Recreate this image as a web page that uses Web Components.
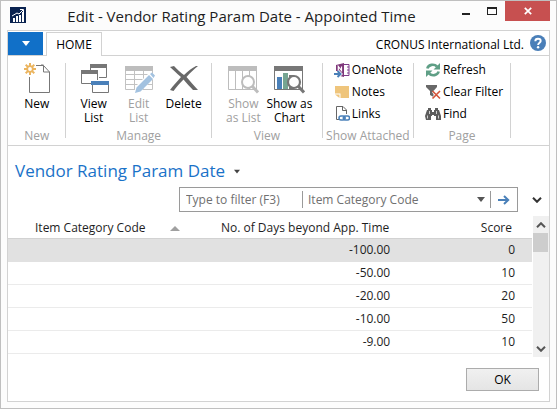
<!DOCTYPE html>
<html lang="en">
<head>
<meta charset="utf-8">
<title>Edit - Vendor Rating Param Date - Appointed Time</title>
<style>
  body { margin: 0; font: 12px/16px "Open Sans", "Noto Sans", sans-serif; color: #1e1e1e; background: #fcfcfc; }
</style>
</head>
<body>
<app-window>
  <title-bar slot="title">Edit - Vendor Rating Param Date - Appointed Time</title-bar>
  <tab-strip company="CRONUS International Ltd.">HOME</tab-strip>
  <ribbon-bar>
    <ribbon-group label="New" style="--w:58">
      <big-action icon="new">New</big-action>
    </ribbon-group>
    <ribbon-group label="Manage" style="--w:146">
      <big-action icon="views">View<br>List</big-action>
      <big-action icon="edit" off>Edit<br>List</big-action>
      <big-action icon="delete">Delete</big-action>
    </ribbon-group>
    <ribbon-group label="View" style="--w:111">
      <big-action icon="list" off>Show<br>as List</big-action>
      <big-action icon="chart">Show as<br>Chart</big-action>
    </ribbon-group>
    <ribbon-group label="Show Attached" style="--w:91" stack>
      <small-action icon="onenote">OneNote</small-action>
      <small-action icon="notes">Notes</small-action>
      <small-action icon="links">Links</small-action>
    </ribbon-group>
    <ribbon-group label="Page" style="--w:97" stack>
      <small-action icon="refresh">Refresh</small-action>
      <small-action icon="clear">Clear Filter</small-action>
      <small-action icon="find">Find</small-action>
    </ribbon-group>
  </ribbon-bar>
  <page-heading>Vendor Rating Param Date</page-heading>
  <filter-bar></filter-bar>
  <data-grid></data-grid>
  <page-footer>OK</page-footer>
</app-window>

<script>
const ICONS = {
  logo: [16, 16, `<path fill="#0a2350" d="M0 0h16v16H0z"/><path fill="#fff" d="M3 11h2v4H3zM6 9h2v6H6zM9 8h2v7H9zM12 5h2v10h-2z"/><path d="M2 9l5-3 2 1 4-4M10 2.500h3.500V6" fill="none" stroke="#fff"/>`],
  min: [8, 8, `<path fill="#222" d="M0 6h8v2H0z"/>`],
  max: [10, 8, `<path fill="#222" fill-rule="evenodd" d="M0 0h10v8H0zM1 2v5h8V2z"/>`],
  close: [8, 8, `<path d="M.8 .8l6.400 6.400M7.200 .8L.8 7.200" stroke="#fff" stroke-width="1.700"/>`],
  down: [8, 5, `<path d="M0 0h8L4 5z" fill="currentColor"/>`],
  up: [10, 5, `<path d="M0 5h10L5 0z" fill="#a0a0a0"/>`],
  help: [16, 16, `<circle cx="8" cy="8" r="8" fill="#4a7fb8"/><path d="M5.300 6.200C5.300 4.400 6.500 3.700 8 3.700s2.700.8 2.700 2.300C10.700 7.600 8.100 7.800 8.100 10" fill="none" stroke="#fff" stroke-width="1.900"/><circle cx="8.100" cy="12.200" r="1.200" fill="#fff"/>`],
  new: [32, 32, `<path d="M15 3.500h7.500l6 6.500v20.500h-20V15M22.500 3.500V10h6M20 3l2.500 0" fill="none" stroke="#777"/><g stroke="#ebb45e" stroke-width="2"><circle cx="9" cy="7" r="2.800" fill="#fff" stroke-width="1.800"/><path d="M9 1v3M9 10v3M3 7h3M12 7h3M4.700 2.700l2.200 2.200M11.100 9.100l2.200 2.200M13.300 2.700l-2.200 2.200M6.900 9.100l-2.200 2.200"/></g>`],
  views: [32, 32, `<g fill="#fff" stroke="#777"><path d="M12.500 2.500h16v13h-16z"/><path d="M3.500 8.500h16v13h-16z"/><path d="M14.500 19.500h16v11h-16z"/></g><path fill="#fff" d="M10 8h2v-1h-2zM20 8v12h1V8zM13 18h7v1h-7zM13 18v5h1v-5zM18 18h13v1H18z"/><path fill="#777" d="M12 2h17v4H12zM3 8h17v4H3z"/><path fill="#4a80b9" d="M13 19h18v4H13z"/>`],
  edit: [32, 32, `<path d="M2.500 4.500h27v23h-27zM2 12.500h28M2 17.500h28M2 22.500h28M11.500 8v20M20.500 8v20" fill="none" stroke="#c2c2c2"/><path fill="#bdbdbd" d="M2 4h28v5H2z"/><path d="M11 31l2-7 14-14 5 5-14 14z" fill="#fff"/><path d="M12 31l1.500-5.500L26 13l4 4-12.500 12.500zM27 12l2-1.500 3 3-1.500 2.500z" fill="#a3c2e0"/>`],
  delete: [32, 32, `<path d="M2 5l4-1c3 3 7 7 10 9 4-4 8-7 12-9h2c-4 3-8 7-11.500 11 3.500 4 7 8 11.500 13h-5c-3-3-6.500-7-9.500-10.500C12 21 8.500 25 5.500 29l-3.500-1c3-4 7.500-9 11-13C9 11.500 5 8 2 5z" fill="#686868"/>`],
  list: [32, 32, `<path d="M1.500 4.500h28v23h-28zM8.500 8v20M15.500 8v20M22.500 8v20" fill="none" stroke="#bdbdbd"/><path fill="#bdbdbd" d="M1 4h29v5H1z"/><circle cx="21" cy="20" r="6" fill="#fff" stroke="#bdbdbd" stroke-width="2"/><path d="M25.500 24.500l5.500 6" stroke="#bdbdbd" stroke-width="3"/>`],
  chart: [32, 32, `<path d="M1.500 4.500h28v23h-28z" fill="#fff" stroke="#777"/><path fill="#777" d="M1 4h29v5H1z"/><path fill="#4a80b9" d="M4 15h5v12H4z"/><path fill="#76a592" d="M10 11h5v16h-5z"/><path fill="#777" d="M16 13h5v14h-5z"/><circle cx="21" cy="20" r="6" fill="#fff" stroke="#777" stroke-width="2.200"/><path d="M25.500 24.500l5.500 6" stroke="#777" stroke-width="3"/>`],
  onenote: [16, 16, `<path d="M9.500 2.500H15v11H9.500" fill="#fff" stroke="#7d3b89"/><path d="M13 5h2M13 8h2M13 11h2" stroke="#7d3b89"/><path fill="#80397b" d="M2 3l8-2v14l-4-1V9H2z"/><path d="M4.300 8.500v-4l3.200 4v-4" stroke="#fff" fill="none" stroke-width="1.200"/><path d="M0 12h6M3.500 9l3 3-3 3" stroke="#fff" fill="none" stroke-width="3.500"/><path d="M0 12h6M3.500 9l3 3-3 3" stroke="#4a80b9" fill="none" stroke-width="2"/>`],
  notes: [16, 16, `<path fill="#efc57c" d="M1 2h14v12H6.500V9.500H1z"/><path fill="#efc57c" d="M1 10.500h4.500V14z"/>`],
  links: [16, 16, `<path d="M5 13.500H2.500V.5H9l3.500 3.500v4M8.500.500V4.500h4" fill="none" stroke="#666"/><g fill="none" stroke="#4a80b9" stroke-width="1.500"><rect x="5" y="10" width="6" height="4" rx="2"/><rect x="9.500" y="10" width="6" height="4" rx="2"/></g><path d="M8.500 12h3.500" stroke="#4a80b9"/>`],
  refresh: [16, 16, `<g fill="none" stroke="#5f9f86" stroke-width="2.600"><path d="M2.300 6.500C3.500 2.500 9 1.500 12 4.500M13.700 9.500c-1.200 4-6.700 5-9.700 2"/></g><path fill="#5f9f86" d="M15 1v6.500H8.500zM1 15V8.500h6.500z"/>`],
  clear: [16, 16, `<path fill="#686868" d="M1 1h11v2L8.500 7v6L5 11V7L1 3z"/><path d="M8 7.500l7 7M15 7.500l-7 7" stroke="#fff" stroke-width="2.600"/><path d="M7.500 7l7.500 7.500M15 7l-7.500 7.500" stroke="#d4553a" stroke-width="1.600"/>`],
  find: [16, 16, `<path fill="#5c5c5c" d="M3 2h3v2h1v2h2V4h1V2h3v2h1l2 6v4h-5v-4H9v-1H7v1H6v4H1l-1-4 2-6h1z"/><path stroke="#fff" d="M4.500 5v3M11.500 5v3M2.500 9.500v3M13.500 9.500v3" stroke-width=".7"/>`],
  go: [12, 10, `<path d="M0 5h10M6 1l4.200 4L6 9" fill="none" stroke="#4a80b9" stroke-width="2"/>`],
  chevron: [10, 6, `<path d="M1 .8l4 4 4-4" fill="none" stroke="currentColor" stroke-width="2"/>`],
  chevronUp: [10, 6, `<path d="M1 5.200l4-4 4 4" fill="none" stroke="currentColor" stroke-width="2"/>`]
};
const icon = n => { const [w, h, body] = ICONS[n]; return `<svg width="${w}" height="${h}" viewBox="0 0 ${w} ${h}" aria-hidden="true">${body}</svg>`; };
const BASE = `:host,*{box-sizing:border-box} svg{display:block;flex:none} button{font:inherit;color:inherit;background:none;border:0;padding:0;margin:0}`;

function define(name, css, html) {
  customElements.define(name, class extends HTMLElement {
    constructor() {
      super();
      this.attachShadow({ mode: "open" }).innerHTML = `<style>${BASE}${css}</style>${html(this)}`;
    }
  });
}

define("app-window", `
  :host { display:flex; flex-direction:column; min-height:100vh; border:1px solid #bfbfbf; padding:0 6px 6px; background:#fcfcfc }
  main { flex:1; display:flex; flex-direction:column; background:#fff; border:1px solid #d2d2d2 }
`, () => `<slot name="title"></slot><main><slot></slot></main>`);

define("title-bar", `
  :host { display:flex; align-items:flex-start; height:29px }
  .logo { padding:6px 0 0 3px }
  h1 { flex:1; margin:0; padding:5px 4px 0 8px; font-size:15px; line-height:20px; font-weight:400; text-align:center; white-space:nowrap }
  button { width:26px; height:20px; display:grid; place-items:center }
  .close { width:45px; background:#c75050 }
`, () => `<span class="logo">${icon("logo")}</span><h1><slot></slot></h1>
  <button aria-label="Minimize">${icon("min")}</button><button aria-label="Maximize">${icon("max")}</button><button class="close" aria-label="Close">${icon("close")}</button>`);

define("tab-strip", `
  :host { display:flex; align-items:flex-end; height:25px; border-bottom:1px solid #d2d2d2 }
  .file { width:35px; height:23px; background:#1170c8; color:#fff; display:grid; place-items:center }
  .tab { height:24px; width:56px; margin:0 0 -1px 3px; border:1px solid #d2d2d2; border-bottom:0; background:#fff; color:#000 }
  .company { margin-left:auto; padding-right:6px; line-height:20px; color:#000 }
  .help { padding:0 3px 4px 0 }
`, e => `<button class="file" aria-label="Application menu">${icon("down")}</button><button class="tab"><slot></slot></button>
  <span class="company">${e.getAttribute("company")}</span><button class="help" aria-label="Help">${icon("help")}</button>`);

define("ribbon-bar", `
  :host { display:flex; height:90px; padding:7px 38px 7px 0; border-bottom:1px solid #d2d2d2 }
`, () => `<slot></slot>`);

define("ribbon-group", `
  :host { flex:var(--w) 1 0; min-width:0; display:flex; flex-direction:column; border-right:1px solid #d2d2d2 }
  .items { flex:1; display:flex; justify-content:center; gap:1px; color:#000 }
  :host([stack]) .items { flex-direction:column; justify-content:flex-start; gap:6px; padding-left:11px }
  .label { color:#a0a0a0; white-space:nowrap; align-self:center; height:4px; display:flex; align-items:center }
`, e => `<div class="items"><slot></slot></div><div class="label">${e.getAttribute("label")}</div>`);

define("big-action", `
  :host { display:block; min-width:44px }
  :host([off]) { color:#a0a0a0 }
  button { width:100%; display:flex; flex-direction:column; align-items:center; line-height:14px; gap:3px; margin-top:-1px; white-space:nowrap }
`, e => `<button ${e.hasAttribute("off") ? 'aria-disabled="true"' : ""}>${icon(e.getAttribute("icon"))}<span><slot></slot></span></button>`);

define("small-action", `
  :host { display:block }
  button { display:flex; align-items:center; gap:2px; white-space:nowrap; margin-top:-1px; margin-bottom:1px }
`, e => `<button>${icon(e.getAttribute("icon"))}<span><slot></slot></span></button>`);

define("page-heading", `
  :host { display:flex; align-items:center; gap:9px; padding:13px 7px 0 }
  h2 { margin:0; font-size:17px; line-height:24px; font-weight:400; color:#1a72c8 }
  button { color:#444 }
  button svg { width:6px }
`, () => `<h2><slot></slot></h2><button aria-label="Page menu">${icon("down")}</button>`);

define("filter-bar", `
  :host { display:flex; justify-content:flex-end; align-items:center; gap:14px; padding:4px 7px 0 171px }
  form { flex:1; min-width:0; display:flex; align-items:center; height:25px; border:1px solid #9a9a9a }
  input, select { font:inherit; color:#707070; border:0; margin:0; background:none; outline:0; min-width:0; appearance:none; height:17px; line-height:17px }
  input { flex:1; padding:0 6px }
  input::placeholder { color:#707070; opacity:1 }
  label { flex:0 0 189px; display:flex; align-items:center; border:solid #9a9a9a; border-width:0 1px; padding:0 5px; color:#555 }
  select { flex:1; padding:0 }
  form button { width:26px; display:grid; place-items:center }
  .more { color:#333 }
`, () => `<form><input type="text" aria-label="Filter" placeholder="Type to filter (F3)"><label><select aria-label="Filter column"><option>Item Category Code</option></select>${icon("down")}</label><button type="button" aria-label="Apply filter">${icon("go")}</button></form><button class="more" aria-label="Expand">${icon("chevron")}</button>`);

define("scroll-bar", `
  :host { display:flex; flex-direction:column; width:16px; background:#f0f0f0; color:#555 }
  button { height:17px; display:grid; place-items:center }
  .thumb { height:19px; margin-right:1px; background:#cdcdcd }
  .down { margin-top:auto }
`, () => `<button aria-label="Scroll up">${icon("chevronUp")}</button><div class="thumb"></div><button class="down" aria-label="Scroll down">${icon("chevron")}</button>`);

const rows = [["-100.00", 0], ["-50.00", 10], ["-20.00", 20], ["-10.00", 50], ["-9.00", 10]];
define("data-grid", `
  :host { display:flex; gap:1px }
  table { flex:1; border-collapse:separate; border-spacing:0; table-layout:fixed; align-self:flex-start; margin-bottom:3px }
  th, td { text-align:right; font-weight:400; white-space:nowrap; padding:0 17px 0 0; height:23px; line-height:22px; border-bottom:1px solid #ebebeb }
  th { height:27px; line-height:18px; padding:7px 20px 1px 0; border-color:#d2d2d2 }
  th:first-child { padding:7px 22px 1px 27px }
  .sort { display:flex; align-items:center; justify-content:space-between }
  .sel td { background:#e1e1e1; border-color:#e1e1e1 }
  col:nth-child(1) { width:37% } col:nth-child(2) { width:39% }
  td:nth-child(2) { padding-right:16px } th:nth-child(2) { padding-right:17px }
  scroll-bar { margin-top:4px }
`, () => `<table><colgroup><col><col><col></colgroup><thead><tr><th><span class="sort">Item Category Code ${icon("up")}</span></th><th>No. of Days beyond App. Time</th><th>Score</th></tr></thead>
  <tbody>${rows.map((r, i) => `<tr${i ? "" : ' class="sel"'}><td></td><td>${r[0]}</td><td>${r[1]}</td></tr>`).join("")}</tbody></table><scroll-bar></scroll-bar>`);

define("page-footer", `
  :host { display:flex; justify-content:flex-end; padding:11px 10px 9px }
  button { width:73px; height:23px; border:1px solid #acacac; background:linear-gradient(#f0f0f0,#e5e5e5); color:#000 }
`, () => `<button><slot></slot></button>`);
</script>
</body>
</html>
